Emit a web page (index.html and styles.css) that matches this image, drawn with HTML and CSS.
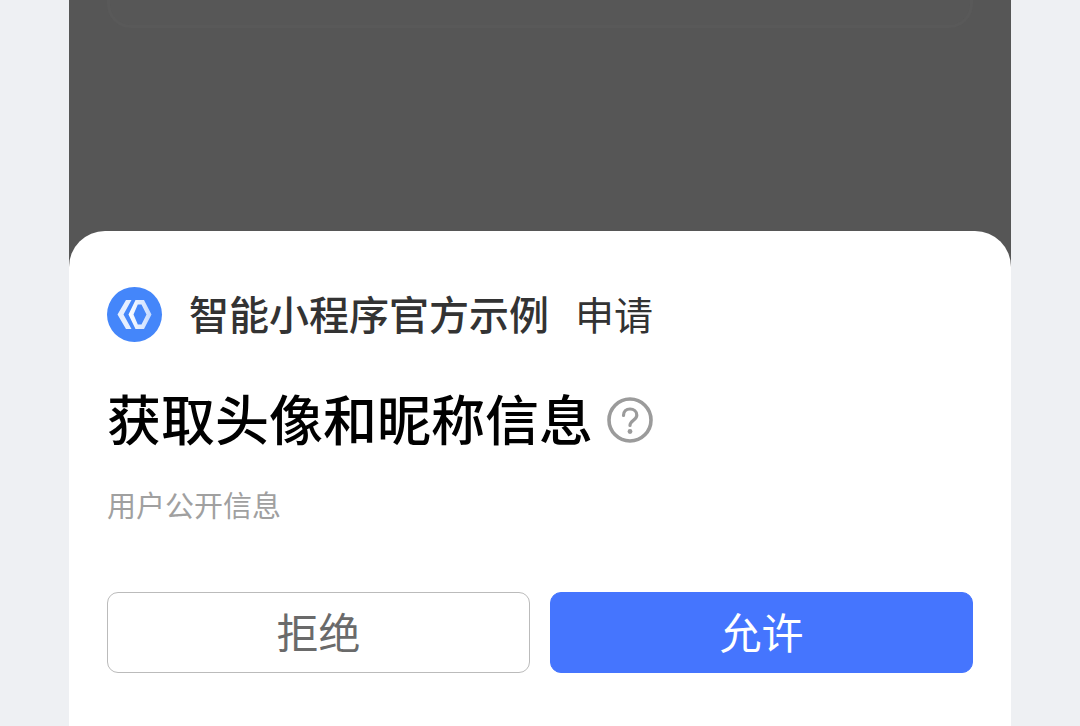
FILE: index.html
```html
<!DOCTYPE html>
<html lang="zh-CN">
<head>
<meta charset="utf-8">
<meta name="viewport" content="width=device-width, initial-scale=1">
<title>智能小程序官方示例</title>
<link rel="stylesheet" href="styles.css">
</head>
<body>
<main class="screen">
  <div class="backdrop"><div class="page-card"></div></div>
  <section class="sheet" role="dialog" aria-labelledby="scope-title">
    <header class="app">
      <svg class="app-logo" viewBox="0 0 56 56" aria-hidden="true">
        <defs>
          <linearGradient id="mark" x1="0" y1="0" x2="1" y2="0">
            <stop offset="0" stop-color="#fff"/>
            <stop offset="1" stop-color="#c3d9ff"/>
          </linearGradient>
        </defs>
        <circle cx="27.5" cy="27.5" r="27.5" fill="#4486fa"/>
        <path d="M19 13h5.500l-8 14.500 8 14.500H19l-8.500-14.500z" fill="#e6efff"/>
        <path fill="url(#mark)" fill-rule="evenodd" d="M28.500 13H37l7.500 14.500L37 42h-8.500l-7-14.500zM30.800 17.500l-4.300 10 4.300 10h3.700l5-10-5-10z"/>
      </svg>
      <span class="app-name">智能小程序官方示例</span>
      <span class="app-action">申请</span>
    </header>
    <div class="scope">
      <h1 class="scope-title" id="scope-title">获取头像和昵称信息</h1>
      <button class="help" type="button" aria-label="说明">
        <svg class="help-icon" viewBox="0 0 46 46" fill="none" aria-hidden="true">
          <circle cx="23" cy="23" r="21" stroke="#9b9b9b" stroke-width="3.600"/>
          <path d="M16.500 18.500c0-4 2.800-6.500 6.500-6.500s6.800 2.500 6.800 6.200c0 4.800-6.800 5.300-6.800 10.300" stroke="#9b9b9b" stroke-width="3.200" stroke-linecap="round"/>
          <circle cx="23" cy="34.500" r="2.400" fill="#9b9b9b"/>
        </svg>
      </button>
    </div>
    <p class="scope-note">用户公开信息</p>
    <div class="actions">
      <button class="btn btn-deny" type="button">拒绝</button>
      <button class="btn btn-allow" type="button">允许</button>
    </div>
  </section>
</main>
</body>
</html>
```
FILE: styles.css
```css
* {
  box-sizing: border-box;
}

body {
  margin: 0;
  background: #eef0f3;
  font-family: "Noto Sans CJK SC", sans-serif;
}

.screen {
  display: flex;
  flex-direction: column;
  min-height: 100vh;
  margin: 0 69px;
  background: #565656;
}

.backdrop {
  height: 231px;
  padding: 0 38px;
}

.page-card {
  height: 28px;
  border: 3px solid #595959;
  border-top: 0;
  border-radius: 0 0 24px 24px;
  background: #575757;
}

.sheet {
  flex: 1;
  padding: 56px 38px 52px;
  border-radius: 36px 36px 0 0;
  background: #fff;
}

.app {
  display: flex;
  height: 56px;
  color: #333;
  font-size: 40px;
  line-height: 52px;
}

.app-logo {
  width: 56px;
  height: 56px;
  margin-right: 26px;
}

.app-name {
  font-weight: 500;
}

.app-action {
  margin-left: 26px;
  font-size: 39px;
}

.scope {
  display: flex;
  align-items: center;
  gap: 14px;
  margin-top: 45px;
}

.scope-title {
  margin: 0;
  padding-bottom: 4px;
  color: #000;
  font-size: 54px;
  font-weight: 500;
  line-height: 60px;
}

.help {
  display: flex;
  padding: 0;
  border: 0;
  background: none;
}

.help-icon {
  width: 46px;
  height: 46px;
}

.scope-note {
  margin: 34px 0 0;
  color: #a0a0a0;
  font-size: 29px;
  font-weight: 400;
  line-height: 36px;
}

.actions {
  display: grid;
  grid-template-columns: 1fr 1fr;
  gap: 20px;
  margin-top: 70px;
}

.btn {
  height: 81px;
  padding: 0 0 4px;
  border: 1px solid #bbb;
  border-radius: 11px;
  font-family: inherit;
  font-size: 42px;
  line-height: 60px;
}

.btn-deny {
  background: #fff;
  color: #6a6a6a;
}

.btn-allow {
  border-color: #4575fe;
  background: #4575fe;
  color: #fff;
}
```
